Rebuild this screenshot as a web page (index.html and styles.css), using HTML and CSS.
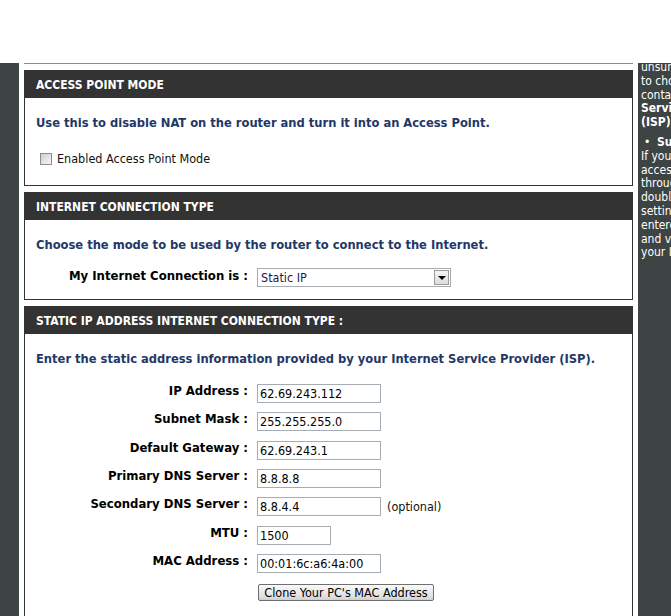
FILE: index.html
```html
<!DOCTYPE html>
<html lang="en">

<head>
	<meta charset="utf-8">
	<title>Internet Connection Setup</title>
	<link rel="stylesheet" href="styles.css">
</head>

<body>
	<div class="topbar"></div>

	<div class="layout">
		<div class="leftbar"></div>

		<div class="content">

			<div class="box">
				<h2>ACCESS POINT MODE</h2>
				<div class="box-body ap-body">
					<p class="intro">Use this to disable NAT on the router and turn it into an Access Point.</p>
					<label class="check"><input type="checkbox" id="ap_mode"> Enabled Access Point Mode</label>
				</div>
			</div>

			<div class="box">
				<h2>INTERNET CONNECTION TYPE</h2>
				<div class="box-body wan-body">
					<p class="intro">Choose the mode to be used by the router to connect to the Internet.</p>
					<div class="row">
						<div class="duple">My Internet Connection is :</div>
						<div class="select-box">
							<select id="wan_type">
								<option>Static IP</option>
								<option>Dynamic IP (DHCP)</option>
								<option>PPPoE (Username / Password)</option>
								<option>PPTP (Username / Password)</option>
								<option>L2TP (Username / Password)</option>
							</select>
							<span class="drop"></span>
						</div>
					</div>
				</div>
			</div>

			<div class="box">
				<h2>STATIC IP ADDRESS INTERNET CONNECTION TYPE :</h2>
				<div class="box-body static-body">
					<p class="intro">Enter the static address information provided by your Internet Service Provider (ISP).</p>

					<div class="form">
						<div class="duple">IP Address :</div>
						<div><input type="text" value="62.69.243.112"></div>

						<div class="duple">Subnet Mask :</div>
						<div><input type="text" value="255.255.255.0"></div>

						<div class="duple">Default Gateway :</div>
						<div><input type="text" value="62.69.243.1"></div>

						<div class="duple">Primary DNS Server :</div>
						<div><input type="text" value="8.8.8.8"></div>

						<div class="duple">Secondary DNS Server :</div>
						<div class="with-note"><input type="text" value="8.8.4.4"> <span class="note">(optional)</span></div>

						<div class="duple">MTU :</div>
						<div><input type="text" class="short" value="1500"></div>

						<div class="duple">MAC Address :</div>
						<div><input type="text" value="00:01:6c:a6:4a:00"></div>

						<div></div>
						<div><button type="button" class="clone">Clone Your PC's MAC Address</button></div>
					</div>
				</div>
			</div>

		</div>

		<div class="helpbar">
			<p class="help-text">unsure of which option<br>to choose, please<br>contact your Internet<br><b>Service Provider</b><br><b>(ISP).</b></p>
			<ul class="help-list">
				<li><b>Support</b><br>If you are having trouble<br>accessing the Internet<br>through the router,<br>double check the<br>settings you have<br>entered on this page<br>and verify them with<br>your ISP if needed.</li>
			</ul>
		</div>
	</div>
</body>

</html>
```

FILE: styles.css
```css
* {
	box-sizing: border-box;
}

body {
	margin: 0;
	width: 671px;
	height: 616px;
	overflow: hidden;
	background: #fff;
	font-family: Tahoma, "DejaVu Sans Condensed", "DejaVu Sans", sans-serif;
	font-size: 12.5px;
	color: #000;
}

.topbar {
	height: 63px;
}

.layout {
	display: flex;
	height: 553px;
}

.leftbar {
	flex-shrink: 0;
	width: 19px;
	margin-right: 5px;
	background: #3e4343;
}

.content {
	flex-shrink: 0;
	width: 609px;
	border-top: 1px solid #f0700f;
	padding-top: 6px;
}

/*	section boxes */

.box {
	border: 1px solid #333;
	border-top: none;
	margin-bottom: 6px;
}

.box h2 {
	margin: 0;
	height: 28px;
	padding: 3px 0 0 11px;
	background: #333;
	color: #fff;
	font-size: 12px;
	line-height: 25px;
	font-weight: bold;
}

.box-body {
	padding: 17px 11px 0;
}

.ap-body {
	height: 87px;
}

.wan-body {
	height: 79px;
}

.static-body {
	padding-bottom: 10px;
}

.intro {
	margin: 0;
	font-size: 12.8px;
	line-height: 15px;
	font-weight: bold;
	color: #1f3868;
}

.check {
	display: flex;
	align-items: center;
	gap: 5px;
	margin: 21px 0 0 4px;
	line-height: 15px;
	color: #111;
}

.check input {
	-webkit-appearance: none;
	appearance: none;
	margin: 0;
	width: 12px;
	height: 12px;
	border: 1px solid #8d8d8d;
	background: linear-gradient(135deg, #cfcfcf, #f6f6f6);
}

/*	label + control rows */

.row {
	display: grid;
	grid-template-columns: 223px 194px;
	column-gap: 9px;
	margin: 16px 0 0 -11px;
}

.duple {
	text-align: right;
	font-size: 13px;
	font-weight: bold;
	line-height: 15px;
}

.form .duple {
	margin-top: -1px;
}

.select-box {
	display: flex;
	height: 19px;
	border: 1px solid #a5acb2;
	background: #fff;
}

.select-box select {
	-webkit-appearance: none;
	appearance: none;
	flex: 1;
	border: none;
	outline: none;
	background: transparent;
	padding: 0 0 0 3px;
	font-family: inherit;
	font-size: 12.5px;
	color: #1a1a4a;
}

.drop {
	position: relative;
	width: 15px;
	height: 15px;
	margin: 1px 1px 0 0;
	border: 1px solid #9a9a9a;
	background: linear-gradient(#f4f4f4, #dcdcdc);
}

.drop::after {
	content: "";
	position: absolute;
	left: 3px;
	top: 5px;
	border-left: 4px solid transparent;
	border-right: 4px solid transparent;
	border-top: 4px solid #000;
}

.form {
	display: grid;
	grid-template-columns: 223px 1fr;
	grid-auto-rows: 28.33px;
	column-gap: 9px;
	margin: 18px 0 0 -11px;
}

.form input {
	width: 124px;
	height: 19px;
	margin: 0;
	padding: 0 2px;
	border: 1px solid #a5acb2;
	font-family: inherit;
	font-size: 12.5px;
	color: #000;
}

.form input.short {
	width: 74px;
}

.with-note {
	display: flex;
	align-items: center;
	height: 19px;
	gap: 6px;
}

.note {
	color: #111;
}

.clone {
	height: 17px;
	width: 176px;
	margin: 2px 0 0 1px;
	padding: 0;
	border: 1px solid #6f6f6f;
	border-radius: 2px;
	background: linear-gradient(#fafafa, #dedede 80%, #cfcfcf);
	font-family: inherit;
	font-size: 12.5px;
	line-height: 15px;
	color: #000;
}

/*	help column on the right */

.helpbar {
	flex-shrink: 0;
	width: 200px;
	margin-left: 5px;
	padding-left: 3px;
	overflow: hidden;
	background: #3e4343;
	color: #fff;
	font-size: 12px;
	line-height: 13.8px;
}

.help-text {
	margin: -2px 0 6px;
}

.help-list {
	margin: 0;
	padding: 0;
	list-style: none;
}

.help-list li::before {
	content: "\2022";
	display: inline-block;
	width: 13px;
	padding-left: 3px;
}
```
